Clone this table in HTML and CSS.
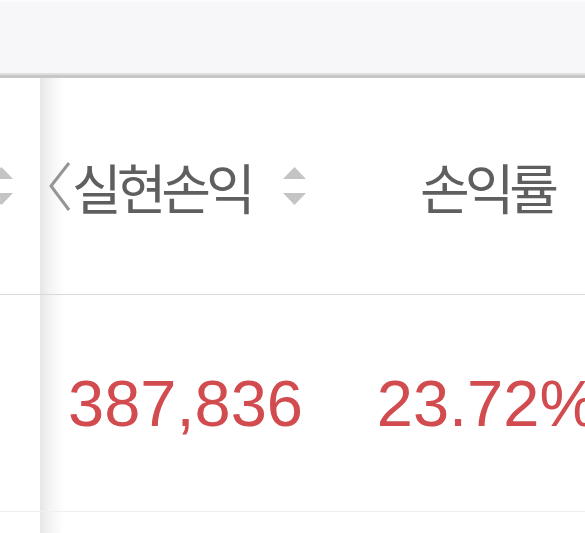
FILE: index.html
```html
<!DOCTYPE html>
<html lang="ko">
<head>
    <meta charset="UTF-8">
    <meta name="viewport" content="width=device-width, initial-scale=1.0">
    <title>실현손익</title>
    <link rel="stylesheet" href="styles.css">
</head>
<body>
    <div class="topbar"></div>

    <div class="table">
        <div class="row head">
            <div class="cell fixed">
                <span class="sorter">
                    <svg width="23" height="38" viewBox="0 0 23 38"><path d="M11.5 0 L23 12 L0 12 Z" fill="#c4c4c4"/><path d="M0 26 L23 26 L11.5 38 Z" fill="#c4c4c4"/></svg>
                </span>
            </div>
            <div class="cell profit">
                <svg class="back" width="24" height="52" viewBox="0 0 24 52"><polyline points="21,2 3,25 21,49" fill="none" stroke="#959595" stroke-width="3"/></svg>
                <span class="title">실현손익</span>
                <span class="sorter">
                    <svg width="23" height="38" viewBox="0 0 23 38"><path d="M11.5 0 L23 12 L0 12 Z" fill="#c4c4c4"/><path d="M0 26 L23 26 L11.5 38 Z" fill="#c4c4c4"/></svg>
                </span>
            </div>
            <div class="cell rate">
                <span class="title">손익률</span>
            </div>
        </div>

        <div class="row body">
            <div class="cell fixed"></div>
            <div class="cell profit">
                <span class="num">387,836</span>
            </div>
            <div class="cell rate">
                <span class="num">23.72%</span>
            </div>
        </div>

        <div class="row tail">
            <div class="cell fixed"></div>
            <div class="cell profit"></div>
            <div class="cell rate"></div>
        </div>
    </div>
</body>
</html>
```

FILE: styles.css
```css
body {
    margin: 0;
    padding: 0;
    width: 585px;
    height: 533px;
    overflow: hidden;
    background: #fff;
    font-family: "Noto Sans CJK KR", "Liberation Sans", sans-serif;
}
.topbar {
    height: 73px;
    background: #f7f7fa;
    border-top: 2px solid #fbfbfd;
    border-bottom: 3px solid #c7c7c7;
    box-shadow: inset 0 -2px 0 #dedede;
    box-sizing: content-box;
}
.table {
    width: 700px;
}
.row {
    display: grid;
    grid-template-columns: 40px 305px 300px;
}
.row.head {
    height: 216px;
    border-bottom: 1px solid #d9d9d9;
}
.row.body {
    height: 216px;
    border-bottom: 1px solid #efefef;
}
.row.tail {
    height: 60px;
}
.cell {
    display: flex;
    align-items: center;
    overflow: hidden;
}
.cell.fixed {
    justify-content: flex-end;
    padding-right: 27px;
    box-sizing: border-box;
}
.cell.profit {
    background: linear-gradient(to right, #e6e6e6 0, #f4f4f4 10px, #fff 24px);
    padding-left: 8px;
    box-sizing: border-box;
}
.cell.rate {
    justify-content: center;
    padding-right: 16px;
    box-sizing: border-box;
}
.sorter {
    display: flex;
    flex-shrink: 0;
}
.back {
    flex-shrink: 0;
    margin-top: 2px;
}
.title {
    font-size: 54px;
    letter-spacing: -5px;
    color: #5f5f5f;
    white-space: nowrap;
}
.profit .title {
    margin-left: 0;
    margin-right: 32px;
}
.num {
    font-family: "Liberation Sans", Arial, sans-serif;
    font-size: 65px;
    color: #d14b4f;
    white-space: nowrap;
}
.profit .num {
    margin-left: 20px;
}
```
